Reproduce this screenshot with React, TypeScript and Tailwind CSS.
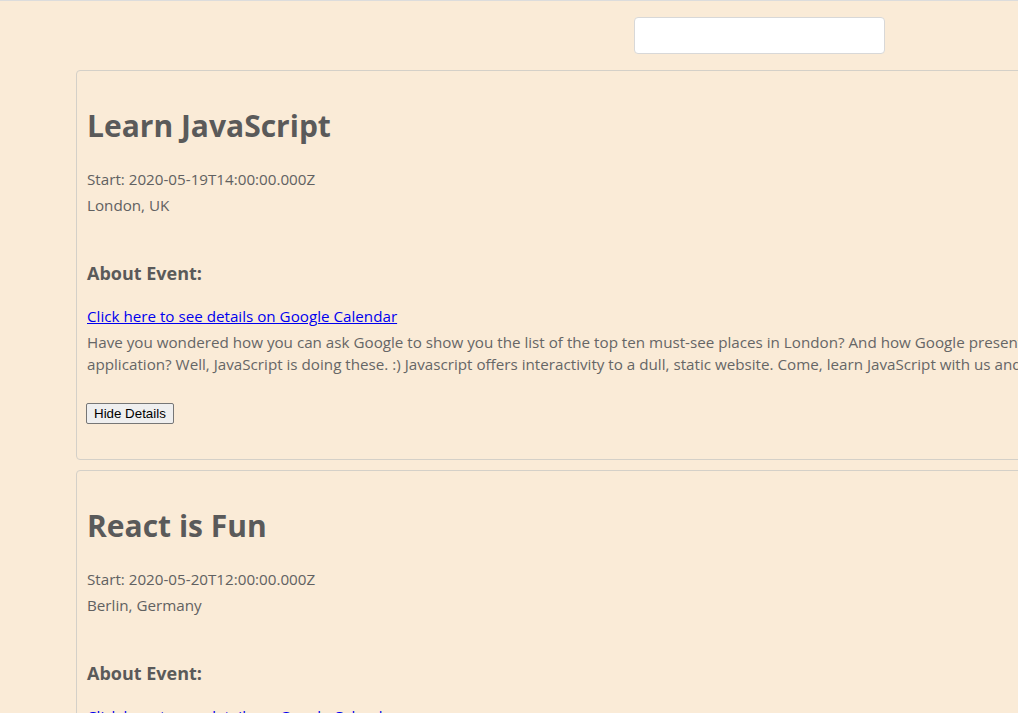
import React from "react";

const font = { fontFamily: '"Open Sans", "Noto Sans", sans-serif' };

function Card({
  title,
  start,
  location,
  lines,
  showButton,
}: {
  title: string;
  start: string;
  location: string;
  lines: string[];
  showButton: boolean;
}) {
  return (
    <div className="ml-[76px] mb-[10px] w-[1400px] rounded-[4px] border border-[#d4d0c8] px-[10px] pt-[33px] pb-[35px]">
      <h1 className="text-[30px] font-bold leading-[44px] text-[#5a5a5a] whitespace-nowrap">{title}</h1>
      <div className="mt-[18px] text-[15.2px] leading-[26px] text-[#616161]">
        <p>Start: {start}</p>
        <p>{location}</p>
      </div>
      <h3 className="mt-[42px] text-[18px] font-bold leading-[26px] text-[#5a5a5a]">About Event:</h3>
      <a
        href="#"
        className="mt-[19px] block w-fit text-[15.2px] leading-[22px] text-[#0000ee] underline"
      >
        Click here to see details on Google Calendar
      </a>
      {lines.length > 0 && (
        <p className="mt-[4px] text-[15.2px] leading-[22px] text-[#666666] whitespace-nowrap">
          {lines.map((l, i) => (
            <React.Fragment key={i}>
              {l}
              {i < lines.length - 1 && <br />}
            </React.Fragment>
          ))}
        </p>
      )}
      {showButton && (
        <button
          className="-ml-px mt-[28px] block rounded-[2px] border border-[#767676] bg-[#efefef] px-[7px] text-[13.33px] leading-[19px] text-black"
          style={{ fontFamily: '"Liberation Sans", Arial, sans-serif' }}
        >
          Hide Details
        </button>
      )}
    </div>
  );
}

export default function App() {
  return (
    <div className="h-[713px] w-full overflow-hidden bg-[#faebd7] border-t border-[#dcdcdc]" style={font}>
      <div className="pt-[16px] pb-[16px]">
        <input
          className="ml-[634px] block h-[37px] w-[251px] rounded-[4px] border border-[#d8d8d8] bg-white"
          type="text"
        />
      </div>
      <Card
        title="Learn JavaScript"
        start="2020-05-19T14:00:00.000Z"
        location="London, UK"
        lines={[
          "Have you wondered how you can ask Google to show you the list of the top ten must-see places in London? And how Google presents you the information such as the address, contact details and opening hours in its",
          "application? Well, JavaScript is doing these. :) Javascript offers interactivity to a dull, static website. Come, learn JavaScript with us and make those beautiful websites.",
        ]}
        showButton
      />
      <Card
        title="React is Fun"
        start="2020-05-20T12:00:00.000Z"
        location="Berlin, Germany"
        lines={[]}
        showButton={false}
      />
    </div>
  );
}
